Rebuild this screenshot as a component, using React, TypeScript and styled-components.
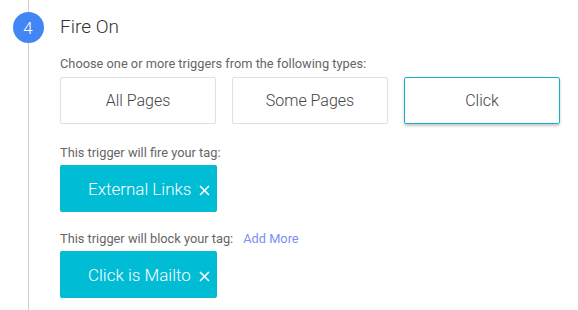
import React from 'react';
import styled, { createGlobalStyle, css } from 'styled-components';

const GlobalStyle = createGlobalStyle`
  html, body {
    margin: 0;
    padding: 0;
    background: #fff;
  }
  body {
    font-family: Roboto, "Liberation Sans", Arial, sans-serif;
    font-weight: 300;
    color: #333;
  }
`;

const Step = styled.div`
  display: flex;
  width: 578px;
  height: 310px;
  overflow: hidden;
`;

const Gutter = styled.div`
  display: flex;
  flex-direction: column;
  align-items: center;
  width: 56px;
  flex-shrink: 0;
`;

const Line = styled.div<{ grow?: boolean }>`
  width: 1px;
  background: #cfcfcf;
  height: 12px;
  ${props =>
    props.grow &&
    css`
      flex: 1;
    `};
`;

const StepNumber = styled.div`
  width: 31px;
  height: 31px;
  border-radius: 50%;
  background: #4285f4;
  color: #fff;
  font-size: 17px;
  display: flex;
  align-items: center;
  justify-content: center;
`;

const Content = styled.div`
  display: flex;
  flex-direction: column;
  padding-left: 4px;
`;

const Title = styled.div`
  font-size: 19px;
  color: #333;
  line-height: 24px;
  margin-top: 15px;
`;

const Label = styled.div`
  font-size: 12.8px;
  font-weight: 400;
  color: #666;
  line-height: 16px;
`;

const TypeRow = styled.div`
  display: flex;
  gap: 16px;
  margin-top: 5px;
`;

const TypeButton = styled.button<{ selected?: boolean }>`
  width: 156px;
  height: 47px;
  background: #fff;
  border: 1px solid #e0e0e0;
  border-radius: 2px;
  font-family: inherit;
  font-weight: 300;
  font-size: 16px;
  color: #444;
  padding: 0;
  cursor: pointer;

  ${props =>
    props.selected &&
    css`
      border-color: #14b1c8;
      box-shadow: 0 2px 3px rgba(0, 0, 0, 0.22);
    `};
`;

const Chip = styled.div`
  display: flex;
  align-items: center;
  justify-content: space-between;
  box-sizing: border-box;
  width: 157px;
  height: 47px;
  padding: 1px 7px 0 28px;
  background: #00bcd4;
  border-radius: 2px;
  color: #fff;
  font-size: 17px;
  margin-top: 4px;
`;

const Remove = styled.svg`
  width: 11px;
  height: 11px;
  stroke: #fff;
  stroke-width: 1.6;
  fill: none;
  margin-top: 2px;
`;

const Section = styled.div<{ top: number }>`
  margin-top: ${props => props.top}px;
`;

const AddMore = styled.a`
  color: #7b8ff2;
  margin-left: 10px;
  text-decoration: none;
  cursor: pointer;
`;

function RemoveIcon() {
  return (
    <Remove viewBox="0 0 11 11">
      <path d="M1 1 L10 10 M10 1 L1 10" />
    </Remove>
  );
}

export default function App() {
  return (
    <>
      <GlobalStyle />
      <Step>
        <Gutter>
          <Line />
          <StepNumber>4</StepNumber>
          <Line grow />
        </Gutter>
        <Content>
          <Title>Fire On</Title>
          <Section top={17}>
            <Label>Choose one or more triggers from the following types:</Label>
            <TypeRow>
              <TypeButton>All Pages</TypeButton>
              <TypeButton>Some Pages</TypeButton>
              <TypeButton selected>Click</TypeButton>
            </TypeRow>
          </Section>
          <Section top={21}>
            <Label>This trigger will fire your tag:</Label>
            <Chip>
              <span>External Links</span>
              <RemoveIcon />
            </Chip>
          </Section>
          <Section top={19}>
            <Label>
              This trigger will block your tag:
              <AddMore>Add More</AddMore>
            </Label>
            <Chip>
              <span>Click is Mailto</span>
              <RemoveIcon />
            </Chip>
          </Section>
        </Content>
      </Step>
    </>
  );
}
